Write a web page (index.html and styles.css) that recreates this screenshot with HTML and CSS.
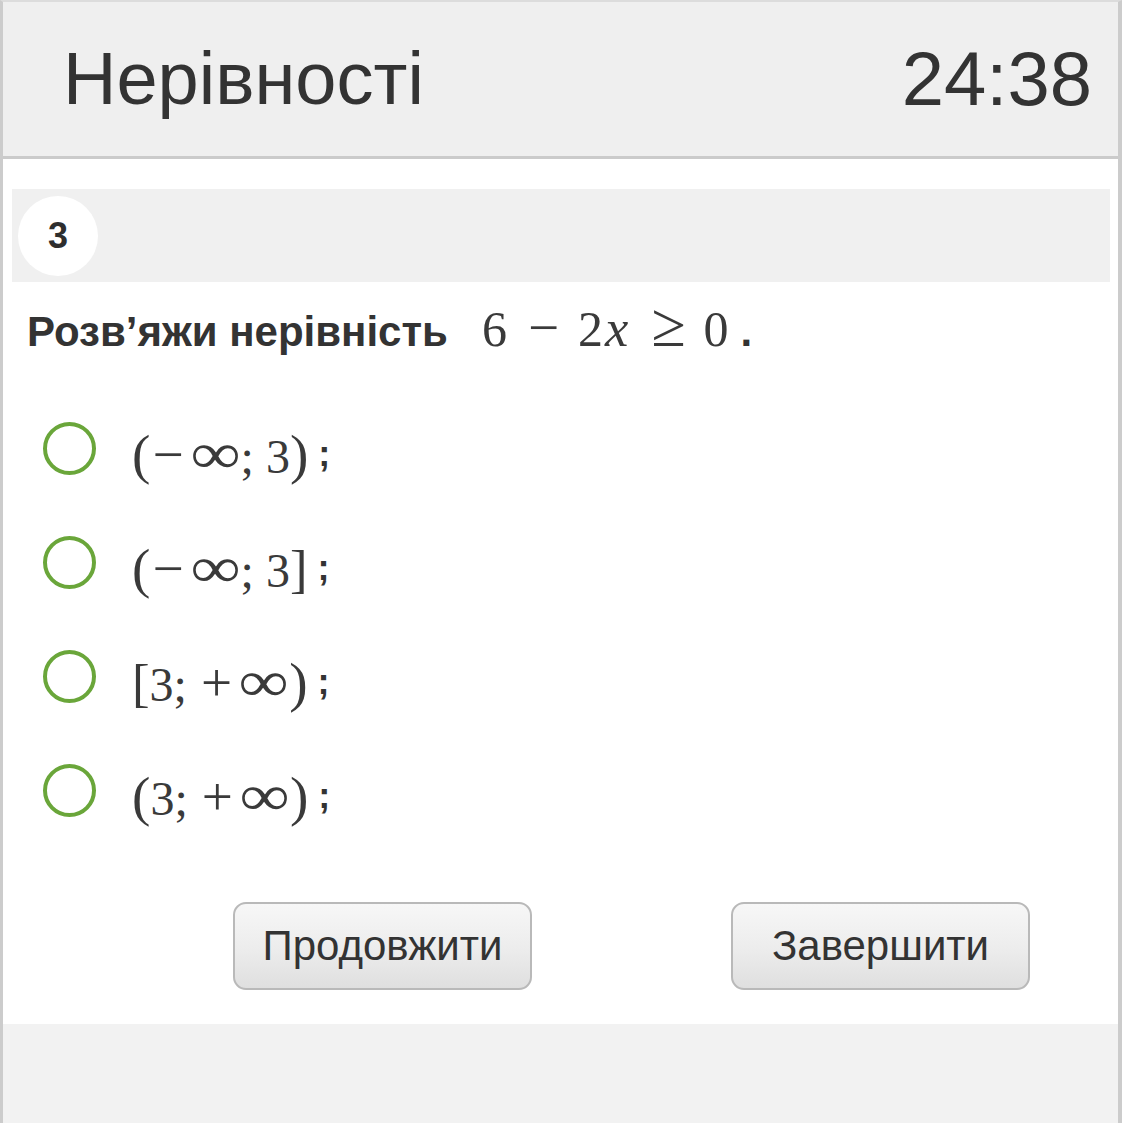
FILE: index.html
```html
<!DOCTYPE html>
<html lang="uk">
<head>
<meta charset="utf-8">
<title>Нерівності</title>
<link rel="stylesheet" href="styles.css">
</head>
<body>
<div class="frame">
  <header class="top">
    <h1 class="title">Нерівності</h1>
    <div class="timer">24:38</div>
  </header>
  <main class="content">
    <div class="qbar"><span class="qnum">3</span></div>
    <p class="question">
      <span class="qtext">Розв’яжи нерівність</span>
      <span class="qmath"><span class="d">6</span><span class="bin">−</span><span class="d">2</span><span class="mi">x</span><span class="rel">≥</span><span class="d">0</span></span>
      <span class="qdot">.</span>
    </p>
    <ul class="options">
      <li class="option">
        <span class="radio"></span>
        <span class="ans"><span class="p">(</span><span class="un">−</span><span class="inf">∞</span><span class="pu">;</span><span class="d">3</span><span class="p">)</span></span><span class="tail">;</span>
      </li>
      <li class="option">
        <span class="radio"></span>
        <span class="ans"><span class="p">(</span><span class="un">−</span><span class="inf">∞</span><span class="pu">;</span><span class="d">3</span><span class="b">]</span></span><span class="tail">;</span>
      </li>
      <li class="option">
        <span class="radio"></span>
        <span class="ans"><span class="b">[</span><span class="d">3</span><span class="pu">;</span><span class="un">+</span><span class="inf">∞</span><span class="p">)</span></span><span class="tail">;</span>
      </li>
      <li class="option">
        <span class="radio"></span>
        <span class="ans"><span class="p">(</span><span class="d">3</span><span class="pu">;</span><span class="un">+</span><span class="inf">∞</span><span class="p">)</span></span><span class="tail">;</span>
      </li>
    </ul>
    <div class="actions">
      <button class="btn" type="button">Продовжити</button>
      <button class="btn" type="button">Завершити</button>
    </div>
  </main>
  <footer class="bottom"></footer>
</div>
</body>
</html>
```
FILE: styles.css
```css
html, body {
  margin: 0;
  padding: 0;
  background: #ffffff;
}

.frame {
  box-sizing: border-box;
  width: 1122px;
  height: 1123px;
  display: flex;
  flex-direction: column;
  border-top: 2px solid #dcdcdc;
  border-left: 3px solid #cccccc;
  border-right: 4px solid #cccccc;
  font-family: "Liberation Sans", Arial, sans-serif;
  color: #333333;
  overflow: hidden;
}

.top {
  height: 154px;
  flex: none;
  display: flex;
  align-items: center;
  justify-content: space-between;
  padding: 0 26px 0 60px;
  background: #efefef;
  border-bottom: 3px solid #cbcbcb;
}

.title {
  margin: 0;
  font-size: 74px;
  font-weight: normal;
  line-height: 1;
  color: #333333;
}

.timer {
  font-size: 76px;
  line-height: 1;
  color: #333333;
}

.content {
  flex: 1;
  display: flex;
  flex-direction: column;
  background: #ffffff;
}

.qbar {
  margin: 30px 8px 0 9px;
  height: 93px;
  background: #f0f0f0;
  display: flex;
  align-items: center;
  padding-left: 6px;
}

.qnum {
  width: 80px;
  height: 80px;
  border-radius: 50%;
  background: #ffffff;
  display: flex;
  align-items: center;
  justify-content: center;
  font-weight: bold;
  font-size: 36px;
  color: #2e2e2e;
}

.question {
  margin: 8px 0 0 24px;
  display: flex;
  align-items: baseline;
  font-size: 42px;
  line-height: 1.15;
}

.qtext {
  font-weight: bold;
}

.qmath {
  margin-left: 34px;
  font-family: "Liberation Serif", "DejaVu Serif", serif;
  font-size: 50px;
  color: #3a3a3a;
  display: flex;
  align-items: baseline;
}

.qmath .bin {
  margin: 0 19px 0 21px;
  font-size: 1.1em;
}

.qmath .mi {
  font-style: italic;
  margin-left: 2px;
  font-size: 1.05em;
}

.qmath .rel {
  margin: 0 18px 0 23px;
  font-size: 1.25em;
}

.qdot {
  margin-left: 12px;
  font-weight: bold;
}

.options {
  list-style: none;
  margin: 30px 0 0 0;
  padding: 0 0 0 40px;
}

.option {
  height: 114px;
  display: flex;
  align-items: center;
}

.radio {
  box-sizing: border-box;
  width: 53px;
  height: 53px;
  border-radius: 50%;
  border: 4.5px solid #6aa63a;
  flex: none;
}

.ans {
  margin-left: 36px;
  padding-top: 10px;
  font-family: "Liberation Serif", "DejaVu Serif", serif;
  font-size: 48px;
  color: #3a3a3a;
  display: flex;
  align-items: baseline;
}

.ans .p {
  font-size: 1.15em;
  font-weight: 300;
}

.ans .b {
  font-size: 1.1em;
}

.ans .un {
  margin: 0 1px 0 2px;
  font-size: 1.15em;
}

.ans .inf {
  display: inline-block;
  font-size: 1.2em;
  transform: scaleX(1.22);
  margin: 0 5px 0 10px;
}

.ans .pu {
  margin-right: 12px;
}

.tail {
  margin-left: 10px;
  padding-top: 10px;
  font-size: 36px;
  font-weight: bold;
  color: #333333;
}

.actions {
  margin-top: 54px;
  display: flex;
  gap: 199px;
  padding-left: 230px;
}

.btn {
  box-sizing: border-box;
  width: 299px;
  height: 88px;
  border: 2px solid #b9b9b9;
  border-radius: 13px;
  background: linear-gradient(to bottom, #f7f7f7 0%, #ececec 55%, #dfdfdf 100%);
  font-family: "Liberation Sans", Arial, sans-serif;
  font-size: 42px;
  color: #333333;
  padding: 0;
}

.bottom {
  flex: none;
  height: 99px;
  background: #f2f2f2;
}
```
